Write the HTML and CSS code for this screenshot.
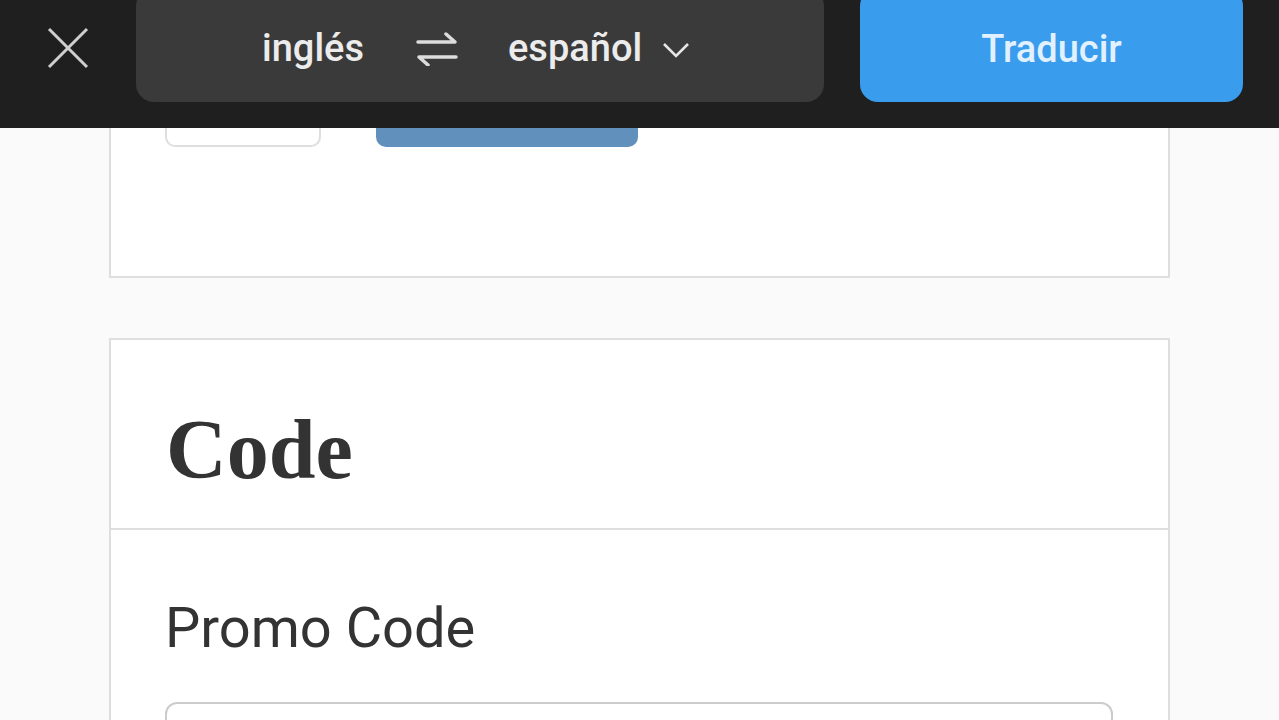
FILE: index.html
```html
<!DOCTYPE html>
<html lang="es">

<head>
    <meta charset="UTF-8">
    <meta name="viewport" content="width=device-width, initial-scale=1.0">
    <title>Promo Code</title>

    <link rel="stylesheet" href="styles.css">

</head>

<body>
    <header class="translate-bar">
        <button class="close-btn" aria-label="Cerrar">
            <svg width="44" height="42" viewBox="0 0 44 42">
                <path d="M3 2 L41 40 M41 2 L3 40" stroke="#cfcfcf" stroke-width="3" fill="none" />
            </svg>
        </button>

        <div class="lang-pill">
            <span class="lang">inglés</span>
            <svg class="swap" width="42" height="34" viewBox="0 0 42 34">
                <path d="M2 10 H39 L30 2 M40 25 H3 L12 33" stroke="#dcdcdc" stroke-width="3.5" fill="none"
                    stroke-linecap="round" stroke-linejoin="round" />
            </svg>
            <span class="lang target">español</span>
            <svg class="chevron" width="28" height="16" viewBox="0 0 28 16">
                <path d="M2 2 L14 14 L26 2" stroke="#e6e6e6" stroke-width="2.6" fill="none" />
            </svg>
        </div>

        <button class="translate-btn">Traducir</button>
    </header>

    <main>
        <section class="card card-top">
            <div class="btn-row">
                <div class="ghost-btn"></div>
                <div class="solid-btn"></div>
            </div>
        </section>

        <section class="card">
            <h2 class="card-title">Code</h2>
            <div class="card-body">
                <label class="field-label" for="promo">Promo Code</label>
                <div class="field-box" id="promo"></div>
            </div>
        </section>
    </main>

</body>

</html>
```

FILE: styles.css
```css
* {
    margin: 0;
    padding: 0;
    box-sizing: border-box;
}

:root {
    --bar-color: #1f1f1f;
    --pill-color: #3a3a3a;
    --blue-color: #3a9ced;
    --line-color: #dedede;
    --text-color: #333333;
}

body {
    background-color: #fafafa;
    font-family: 'Roboto', 'Liberation Sans', sans-serif;
    color: var(--text-color);
    overflow: hidden;
}

.translate-bar {
    display: flex;
    align-items: flex-start;
    height: 128px;
    padding: 0 36px 0 46px;
    background-color: var(--bar-color);
    overflow: hidden;
}

.close-btn {
    display: flex;
    align-items: center;
    justify-content: center;
    width: 44px;
    height: 96px;
    margin-right: 46px;
    background: none;
    border: none;
}

.lang-pill {
    display: flex;
    align-items: center;
    width: 688px;
    height: 114px;
    margin-top: -12px;
    padding-top: 8px;
    padding-left: 126px;
    background-color: var(--pill-color);
    border-radius: 18px;
}

.lang {
    font-size: 38px;
    font-weight: 500;
    color: #ececec;
    line-height: 1.2;
}

.swap {
    margin: 0 50px 0 52px;
}

.chevron {
    margin-left: 20px;
    margin-top: 2px;
}

.translate-btn {
    width: 383px;
    height: 114px;
    margin-top: -12px;
    margin-left: 36px;
    padding-top: 8px;
    background-color: var(--blue-color);
    border: none;
    border-radius: 18px;
    font-family: 'Roboto', 'Liberation Sans', sans-serif;
    font-size: 38px;
    font-weight: 500;
    color: #e2f1ff;
}

main {
    padding: 0 109px;
}

.card {
    background-color: #ffffff;
    border: 2px solid var(--line-color);
}

.card-top {
    border-top: none;
    padding: 0 54px 129px;
}

.btn-row {
    display: flex;
    gap: 55px;
    height: 19px;
}

.ghost-btn {
    width: 156px;
    border: 2px solid var(--line-color);
    border-top: none;
    border-radius: 0 0 10px 10px;
}

.solid-btn {
    width: 262px;
    background-color: #6190bd;
    border-radius: 0 0 10px 10px;
}

.card-top + .card {
    margin-top: 60px;
}

.card-title {
    padding: 68px 55px 36px;
    font-family: 'Liberation Serif', 'Times New Roman', serif;
    font-size: 84px;
    font-weight: bold;
    line-height: 1;
    color: #333333;
    border-bottom: 2px solid var(--line-color);
}

.card-body {
    padding: 65px 55px 0 54px;
}

.field-label {
    display: block;
    font-size: 56px;
    line-height: 1.2;
    color: #333333;
}

.field-box {
    height: 80px;
    margin-top: 40px;
    border: 2px solid #cccccc;
    border-radius: 12px;
}
```
